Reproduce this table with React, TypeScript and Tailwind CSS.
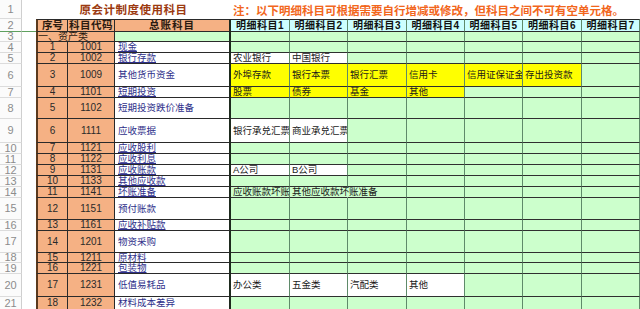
import React from 'react';

type Fill = 'white' | 'yellow' | 'green';

interface Row {
  h: number;
  seq?: string;
  code?: string;
  name?: string;
  link?: boolean;
  items?: string[];
  fill?: Fill;
  overflowCol?: number;
}

const rows: Row[] = [
  { h: 10 },
  { h: 11, seq: '1', code: '1001', name: '现金', link: true },
  { h: 11, seq: '2', code: '1002', name: '银行存款', link: true, items: ['农业银行', '中国银行'], fill: 'white' },
  { h: 23, seq: '3', code: '1009', name: '其他货币资金', items: ['外埠存款', '银行本票', '银行汇票', '信用卡', '信用证保证金', '存出投资款'], fill: 'yellow' },
  { h: 11, seq: '4', code: '1101', name: '短期投资', link: true, items: ['股票', '债券', '基金', '其他'], fill: 'yellow' },
  { h: 21, seq: '5', code: '1102', name: '短期投资跌价准备' },
  { h: 24, seq: '6', code: '1111', name: '应收票据', items: ['银行承兑汇票', '商业承兑汇票'], fill: 'white' },
  { h: 11, seq: '7', code: '1121', name: '应收股利', link: true },
  { h: 11, seq: '8', code: '1122', name: '应收利息', link: true },
  { h: 11, seq: '9', code: '1131', name: '应收账款', link: true, items: ['A公司', 'B公司'], fill: 'white' },
  { h: 11, seq: '10', code: '1133', name: '其他应收款', link: true },
  { h: 11, seq: '11', code: '1141', name: '坏账准备', link: true, items: ['应收账款坏账准备', '其他应收款坏账准备'], fill: 'green', overflowCol: 1 },
  { h: 22, seq: '12', code: '1151', name: '预付账款' },
  { h: 11, seq: '13', code: '1161', name: '应收补贴款', link: true },
  { h: 22, seq: '14', code: '1201', name: '物资采购' },
  { h: 10, seq: '15', code: '1211', name: '原材料', link: true },
  { h: 11, seq: '16', code: '1221', name: '包装物', link: true },
  { h: 23, seq: '17', code: '1231', name: '低值易耗品', items: ['办公类', '五金类', '汽配类', '其他'], fill: 'white' },
  { h: 13, seq: '18', code: '1232', name: '材料成本差异' },
];

const fillClass: Record<Fill, string> = {
  white: 'bg-white',
  yellow: 'bg-[#ffff00]',
  green: 'bg-[#ccffcc]',
};

const cjk = "font-['Liberation_Sans','Noto_Sans_CJK_SC',sans-serif]";

function RowHead({ n, green }: { n: number; green?: boolean }) {
  return (
    <div
      className={`flex items-center justify-center bg-[#fbfbfb] border-r border-b border-r-[#cfcfcf] ${
        green ? 'border-b-[#5fa05f]' : 'border-b-[#dcdcdc]'
      } text-[11px] leading-none text-[#8c8c8c]`}
    >
      {n}
    </div>
  );
}

function Spacer({ green }: { green?: boolean }) {
  return <div className={`bg-white ${green ? 'border-b border-b-[#5fa05f]' : ''}`} />;
}

export default function App() {
  return (
    <div className={`w-[640px] h-[309px] overflow-hidden bg-white ${cjk}`}>
      <div className="grid grid-cols-[22px_14px_32px_47px_116px_59px_58px_59px_58px_58px_59px_58px] grid-rows-[19px_13px_10px_11px_11px_23px_11px_21px_24px_11px_11px_11px_11px_11px_22px_11px_22px_10px_11px_23px_13px]">
        {/* row 1 */}
        <RowHead n={1} />
        <Spacer />
        <div className="col-span-3 flex items-center justify-center pt-[3px] text-[11.5px] font-bold leading-none tracking-[0.5px] text-[#9c3a10]">
          原会计制度使用科目
        </div>
        <div className="col-span-7 flex items-center pl-[2px] pt-[4px] whitespace-nowrap text-[11.5px] font-bold leading-none text-[#f2661c]">
          注：以下明细科目可根据需要自行增减或修改，但科目之间不可有空单元格。
        </div>

        {/* row 2 */}
        <RowHead n={2} green />
        <Spacer green />
        <div className="flex items-center justify-center bg-[#f5b184] border-l-2 border-l-[#5b3a1e] border-t border-r border-b border-[#2a2a2a] text-[10.5px] font-bold leading-none text-[#2a1a10]">
          序号
        </div>
        <div className="flex items-center justify-center bg-[#f5b184] border-t border-r border-b border-[#2a2a2a] text-[10.5px] font-bold leading-none tracking-[0.5px] text-[#2a1a10]">
          科目代码
        </div>
        <div className="flex items-center justify-center bg-[#f5b184] border-t border-b border-[#2a2a2a] border-r-2 border-r-[#1e2a1e] text-[10.5px] font-bold leading-none tracking-[1px] text-[#2a1a10]">
          总账科目
        </div>
        {[1, 2, 3, 4, 5, 6, 7].map((i) => (
          <div
            key={i}
            className="flex items-center justify-center bg-[#ccffff] border-t border-b border-[#2a2a2a] border-r border-r-[#5f8a6a] text-[10px] font-bold leading-none tracking-[0.5px] text-[#111]"
          >
            明细科目{i}
          </div>
        ))}

        {rows.map((r, idx) => {
          const n = idx + 3;
          return (
            <React.Fragment key={n}>
              <RowHead n={n} />
              <Spacer />
              {r.seq ? (
                <>
                  <div className="flex items-center justify-center bg-[#f5b184] border-l-2 border-l-[#5b3a1e] border-r border-b border-[#2a2a2a] text-[10px] leading-none text-[#2a2a2a]">
                    {r.seq}
                  </div>
                  <div className="flex items-center justify-center bg-[#f5b184] border-r border-b border-[#2a2a2a] text-[10px] leading-none text-[#2a2a2a]">
                    {r.code}
                  </div>
                  <div className="flex items-center overflow-hidden whitespace-nowrap bg-white border-b border-[#2a2a2a] border-r-2 border-r-[#1e2a1e] pl-[3px] text-[9.5px] leading-none text-[#2e2f8a]">
                    <span className={r.link ? 'underline underline-offset-[1px]' : ''}>{r.name}</span>
                  </div>
                </>
              ) : (
                <>
                  <div className="col-span-2 flex items-center bg-[#f5b184] border-l-2 border-l-[#5b3a1e] border-r border-b border-[#2a2a2a] text-[10px] leading-none whitespace-nowrap text-[#2a1a10]">
                    一、资产类
                  </div>
                  <div className="bg-[#ccffcc] border-b border-[#2a2a2a] border-r-2 border-r-[#1e2a1e]" />
                </>
              )}
              {[0, 1, 2, 3, 4, 5, 6].map((c) => {
                const item = r.items?.[c];
                const bg = item && r.fill ? fillClass[r.fill] : fillClass.green;
                const over = r.overflowCol === c;
                return (
                  <div
                    key={c}
                    className={`flex items-center whitespace-nowrap pl-[2px] border-b border-b-[#2f2f2f] border-r ${
                      over ? 'relative z-10 overflow-visible border-r-transparent' : 'overflow-hidden border-r-[#5f8a6a]'
                    } ${bg} text-[9.5px] leading-none text-[#1a1a1a]`}
                  >
                    {item}
                  </div>
                );
              })}
            </React.Fragment>
          );
        })}
      </div>
    </div>
  );
}
